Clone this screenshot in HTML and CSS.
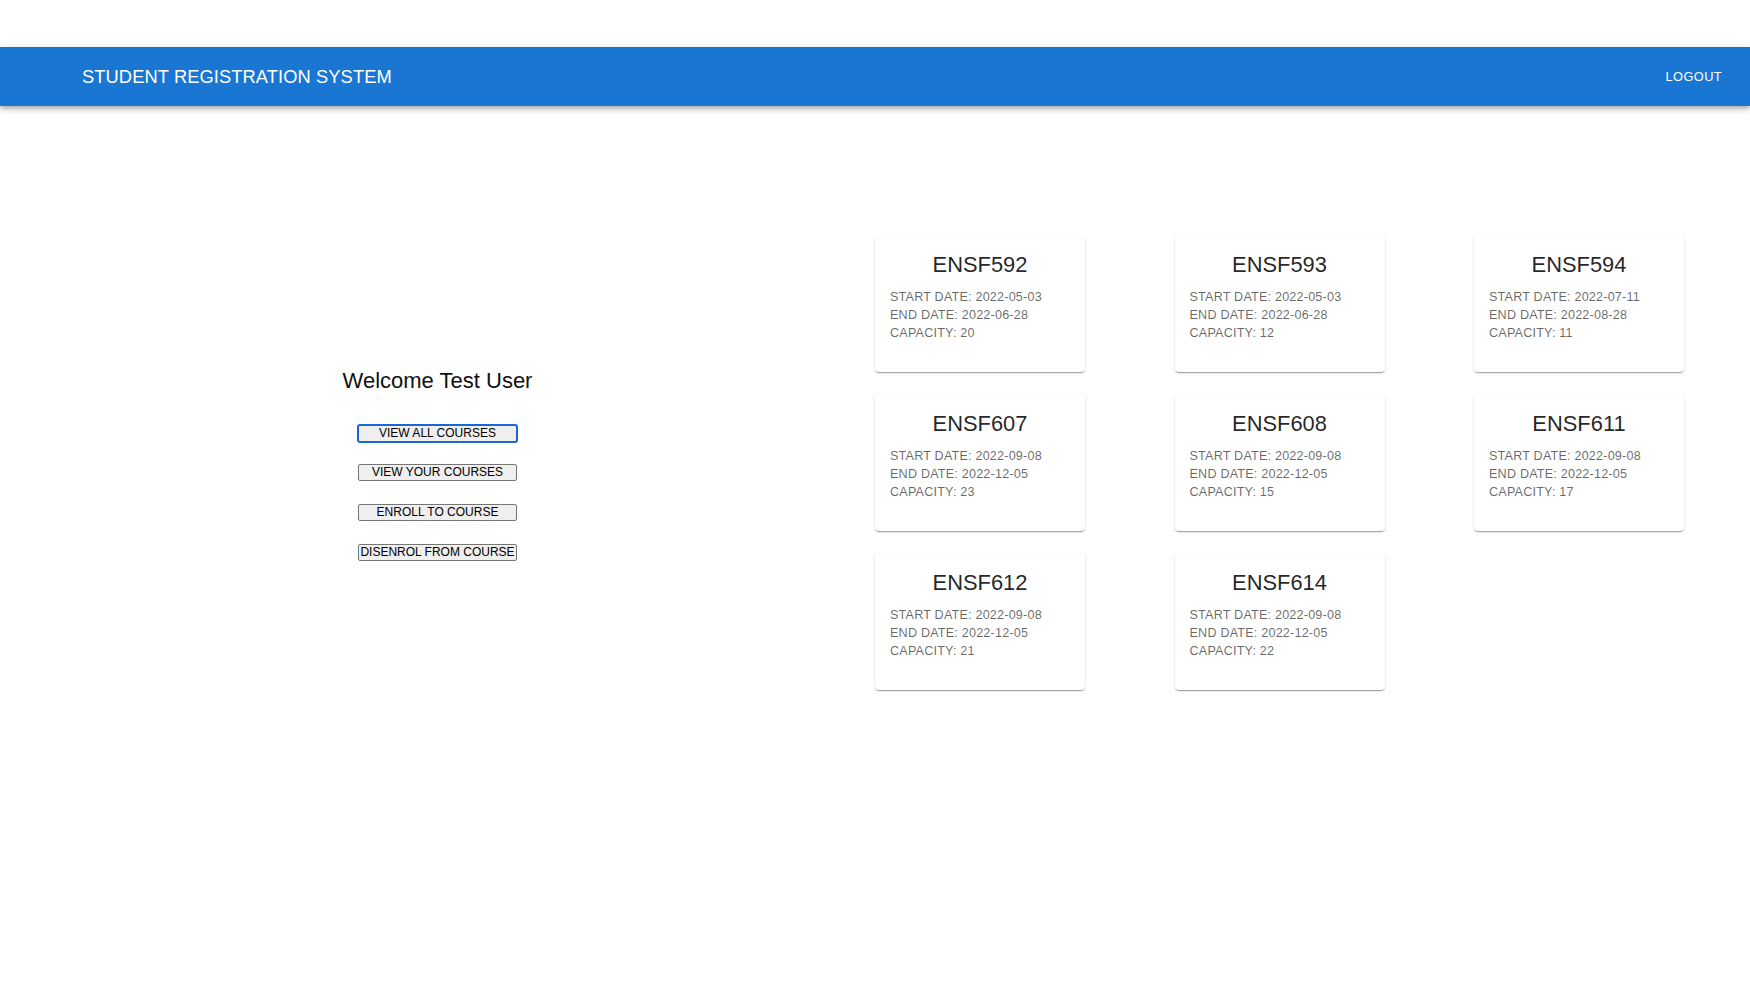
FILE: index.html
```html
<!DOCTYPE html>
<html lang="en">
<head>
<meta charset="utf-8">
<title>Student Registration System</title>
<link rel="stylesheet" href="styles.css">
</head>
<body>
<div class="page">
  <header class="appbar">
    <div class="brand">STUDENT REGISTRATION SYSTEM</div>
    <button class="logout" type="button">LOGOUT</button>
  </header>
  <main class="main">
    <section class="left">
      <h2 class="welcome">Welcome Test User</h2>
      <div class="actions">
        <button class="btn focused" type="button">VIEW ALL COURSES</button>
        <button class="btn" type="button">VIEW YOUR COURSES</button>
        <button class="btn" type="button">ENROLL TO COURSE</button>
        <button class="btn" type="button">DISENROL FROM COURSE</button>
      </div>
    </section>
    <section class="grid">
      <div class="card">
        <h3 class="card-title">ENSF592</h3>
        <p class="card-line">START DATE: 2022-05-03</p>
        <p class="card-line">END DATE: 2022-06-28</p>
        <p class="card-line">CAPACITY: 20</p>
      </div>
      <div class="card">
        <h3 class="card-title">ENSF593</h3>
        <p class="card-line">START DATE: 2022-05-03</p>
        <p class="card-line">END DATE: 2022-06-28</p>
        <p class="card-line">CAPACITY: 12</p>
      </div>
      <div class="card">
        <h3 class="card-title">ENSF594</h3>
        <p class="card-line">START DATE: 2022-07-11</p>
        <p class="card-line">END DATE: 2022-08-28</p>
        <p class="card-line">CAPACITY: 11</p>
      </div>
      <div class="card">
        <h3 class="card-title">ENSF607</h3>
        <p class="card-line">START DATE: 2022-09-08</p>
        <p class="card-line">END DATE: 2022-12-05</p>
        <p class="card-line">CAPACITY: 23</p>
      </div>
      <div class="card">
        <h3 class="card-title">ENSF608</h3>
        <p class="card-line">START DATE: 2022-09-08</p>
        <p class="card-line">END DATE: 2022-12-05</p>
        <p class="card-line">CAPACITY: 15</p>
      </div>
      <div class="card">
        <h3 class="card-title">ENSF611</h3>
        <p class="card-line">START DATE: 2022-09-08</p>
        <p class="card-line">END DATE: 2022-12-05</p>
        <p class="card-line">CAPACITY: 17</p>
      </div>
      <div class="card">
        <h3 class="card-title">ENSF612</h3>
        <p class="card-line">START DATE: 2022-09-08</p>
        <p class="card-line">END DATE: 2022-12-05</p>
        <p class="card-line">CAPACITY: 21</p>
      </div>
      <div class="card">
        <h3 class="card-title">ENSF614</h3>
        <p class="card-line">START DATE: 2022-09-08</p>
        <p class="card-line">END DATE: 2022-12-05</p>
        <p class="card-line">CAPACITY: 22</p>
      </div>
    </section>
  </main>
</div>
</body>
</html>
```
FILE: styles.css
```css
* { box-sizing: border-box; }

html, body {
  margin: 0;
  padding: 0;
  background: #ffffff;
  font-family: "Liberation Sans", Arial, Helvetica, sans-serif;
}

.page {
  padding-top: 47px;
  min-height: 985px;
}

.appbar {
  height: 59px;
  background: #1976d2;
  color: #ffffff;
  display: flex;
  align-items: center;
  justify-content: space-between;
  padding: 0 21px 0 82px;
  box-shadow: 0 2px 4px -1px rgba(0,0,0,0.2), 0 4px 5px 0 rgba(0,0,0,0.14), 0 1px 10px 0 rgba(0,0,0,0.12);
  position: relative;
  z-index: 1;
}

.brand {
  font-size: 18.3px;
  font-weight: 500;
  letter-spacing: 0.1px;
}

.logout {
  background: none;
  border: none;
  color: #ffffff;
  font-family: inherit;
  font-size: 12.8px;
  font-weight: 500;
  letter-spacing: 0.4px;
  padding: 6px 7px;
  cursor: pointer;
}

.main {
  display: flex;
  align-items: center;
  padding-top: 129px;
}

.left {
  width: 875px;
  flex: 0 0 875px;
  display: flex;
  flex-direction: column;
  align-items: center;
}

.welcome {
  margin: 4px 0 30.5px;
  font-size: 22px;
  line-height: 26px;
  font-weight: 400;
  color: #111111;
}

.actions {
  display: flex;
  flex-direction: column;
  gap: 22.7px;
}

.btn {
  font-family: "Liberation Sans", Arial, sans-serif;
  font-size: 12px;
  line-height: 13px;
  padding: 1px 1px;
  border: 1px solid #767676;
  border-radius: 2px;
  background: #efefef;
  color: #000000;
  white-space: nowrap;
}

.btn.focused {
  border-color: #1a66d2;
  box-shadow: 0 0 0 1px #1a66d2;
}

.grid {
  flex: 1;
  display: grid;
  grid-template-columns: repeat(3, 210px);
  justify-content: space-between;
  row-gap: 22px;
  padding-right: 66px;
}

.card {
  height: 137px;
  background: #ffffff;
  border-radius: 4px;
  padding: 16.4px 15px 14.4px;
  box-shadow: 0 2px 1px -1px rgba(0,0,0,0.2), 0 1px 1px 0 rgba(0,0,0,0.14), 0 1px 3px 0 rgba(0,0,0,0.12);
}

.card-title {
  margin: 0 0 8px;
  font-size: 21.9px;
  line-height: 28.8px;
  font-weight: 400;
  text-align: center;
  color: rgba(0,0,0,0.87);
}

.card-line {
  margin: 0;
  font-size: 12.6px;
  line-height: 18px;
  letter-spacing: 0.2px;
  color: rgba(0,0,0,0.6);
}
```
